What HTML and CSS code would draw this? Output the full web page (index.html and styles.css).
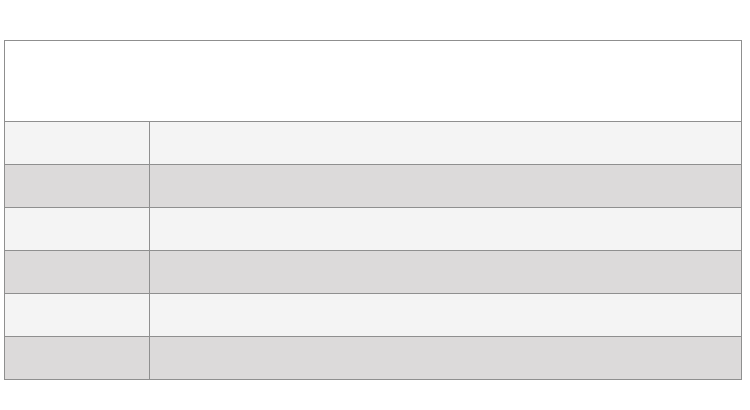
FILE: index.html
```html
<!DOCTYPE html>
<html>
<head>
<meta charset="utf-8">
<link rel="stylesheet" href="styles.css">
</head>
<body>
<div class="table">
  <div class="head"></div>
  <div class="row light"><div class="cell key"></div><div class="cell"></div></div>
  <div class="row dark"><div class="cell key"></div><div class="cell"></div></div>
  <div class="row light"><div class="cell key"></div><div class="cell"></div></div>
  <div class="row dark"><div class="cell key"></div><div class="cell"></div></div>
  <div class="row light"><div class="cell key"></div><div class="cell"></div></div>
  <div class="row dark"><div class="cell key"></div><div class="cell"></div></div>
</div>
</body>
</html>
```
FILE: styles.css
```css
html, body {
  margin: 0;
  padding: 0;
  background: #ffffff;
  font-family: "Liberation Sans", Arial, sans-serif;
}
body {
  padding: 40px 0 0 4px;
}
.table {
  width: 738px;
  box-sizing: border-box;
  border: 1px solid #8f8f8f;
  background: #ffffff;
}
.head {
  height: 81px;
  box-sizing: border-box;
  border-bottom: 1px solid #8f8f8f;
}
.row {
  display: grid;
  grid-template-columns: 145px 1fr;
  height: 43px;
  box-sizing: border-box;
  border-bottom: 1px solid #8f8f8f;
}
.row:last-child {
  border-bottom: none;
  height: 42px;
}
.key {
  border-right: 1px solid #8f8f8f;
}
.light {
  background: #f4f4f4;
}
.dark {
  background: #dcdada;
}
```
